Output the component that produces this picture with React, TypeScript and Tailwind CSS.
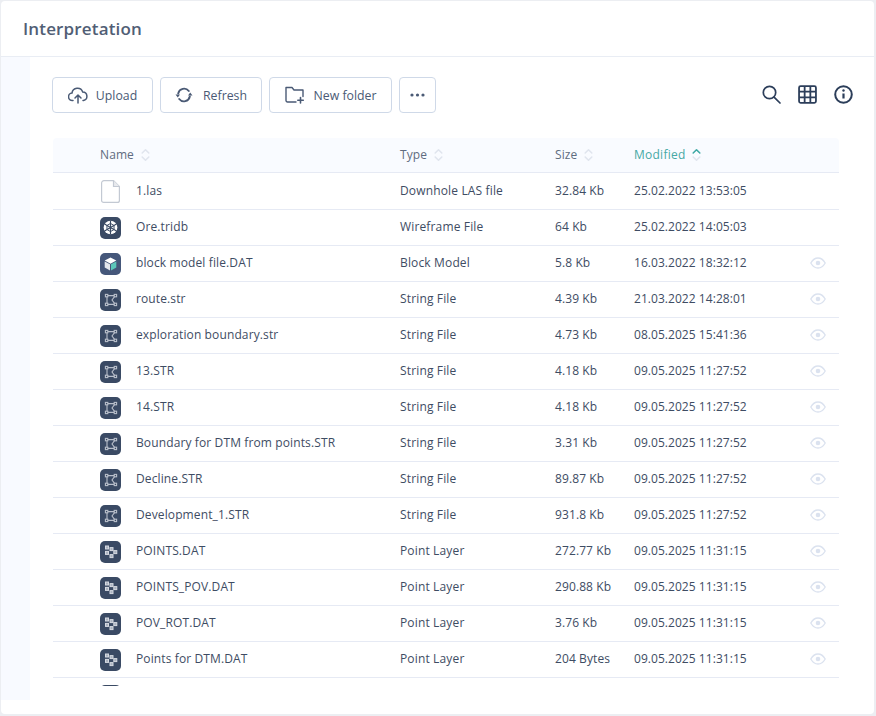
import React from "react";

const Tile = ({ children, tone }: { children: React.ReactNode; tone?: string }) => (
  <div className={`w-[21px] h-[22px] rounded-[5px] ${tone ?? "bg-[#3a4a64]"} flex items-center justify-center shrink-0`}>{children}</div>
);

const FileIcon = () => (
  <svg width="19" height="23" viewBox="0 0 19 23" fill="none" stroke="#c3c9d3" strokeWidth="1.200" className="ml-[1px]">
    <path d="M3 .6h9.500L18.400 6.500v13.900a2 2 0 0 1-2 2H2.600a2 2 0 0 1-2-2V3a2.400 2.400 0 0 1 2.400-2.400z" />
    <path d="M12.500.6v5.900h5.900" fill="#e8eaee" />
  </svg>
);

const WireIcon = () => (
  <Tile>
    <svg width="15" height="15" viewBox="0 0 14 14">
      <circle cx="7" cy="7" r="6.400" fill="#fff" />
      <path d="M7 .5v13M1.400 3.800l11.200 6.400M12.600 3.800 1.400 10.200" stroke="#3a4a64" strokeWidth="1.100" />
      <path d="M7 3.200 10.300 5.100v3.800L7 10.800 3.700 8.900V5.100z" stroke="#3a4a64" strokeWidth=".9" fill="none" />
    </svg>
  </Tile>
);

const BlockIcon = () => (
  <Tile tone="bg-[#45577a]">
    <svg width="13" height="14" viewBox="0 0 13 14">
      <path d="M6.500.5 12.300 3.600 6.500 6.700.7 3.600z" fill="#fff" />
      <path d="M.7 4.400 6 7.300v6.200L.7 10.600z" fill="#e4e8ee" />
      <path d="M7 7.300l5.300-2.900v6.200L7 13.500z" fill="#5cc8ba" />
    </svg>
  </Tile>
);

const StringIcon = () => (
  <Tile>
    <svg width="14" height="14" viewBox="0 0 14 14" fill="none" stroke="#b9bfca" strokeWidth="1.100">
      <path d="M3 2.600h8.400L8 7l3.400 4.400H3z" />
      <rect x="1.400" y="1.400" width="2.400" height="2.400" fill="#3a4a64" />
      <rect x="10.200" y="1.400" width="2.400" height="2.400" fill="#3a4a64" />
      <rect x="1.400" y="10.200" width="2.400" height="2.400" fill="#3a4a64" />
      <rect x="10.200" y="10.200" width="2.400" height="2.400" fill="#3a4a64" />
    </svg>
  </Tile>
);

const PointIcon = () => (
  <Tile>
    <svg width="14" height="14" viewBox="0 0 14 14" fill="#aab2c0" stroke="#d6dae1" strokeWidth="1">
      <rect x="1.500" y="1" width="3" height="3" />
      <rect x="6" y="2.600" width="3" height="3" />
      <rect x="1.500" y="6.400" width="3" height="3" />
      <rect x="9.800" y="5.600" width="3" height="3" />
      <rect x="6" y="9.600" width="3" height="3" />
    </svg>
  </Tile>
);

const Eye = () => (
  <svg width="16" height="12" viewBox="0 0 16 12" fill="none" className="mb-[2px]">
    <path d="M.8 6C2.600 2.800 5 1 8 1s5.400 1.800 7.200 5C13.400 9.200 11 11 8 11S2.600 9.200.8 6z" stroke="#dbe2ef" strokeWidth="1.300" />
    <circle cx="8" cy="6" r="2.300" fill="#dbe2ef" />
  </svg>
);

const Sort = ({ active }: { active?: boolean }) => (
  <svg width="9" height="14" viewBox="0 0 9 14" fill="none" strokeWidth="1.600" strokeLinecap="round" strokeLinejoin="round">
    <path d="M1.200 5 4.500 1.800 7.800 5" stroke={active ? "#3fa9a5" : "#e0e5ee"} />
    <path d="M1.200 9 4.500 12.200 7.800 9" stroke="#e0e5ee" />
  </svg>
);

type Kind = "file" | "wire" | "block" | "string" | "point";
const icons: Record<Kind, React.ReactNode> = {
  file: <FileIcon />,
  wire: <WireIcon />,
  block: <BlockIcon />,
  string: <StringIcon />,
  point: <PointIcon />,
};

const rows: [Kind, string, string, string, string, boolean][] = [
  ["file", "1.las", "Downhole LAS file", "32.84 Kb", "25.02.2022 13:53:05", false],
  ["wire", "Ore.tridb", "Wireframe File", "64 Kb", "25.02.2022 14:05:03", false],
  ["block", "block model file.DAT", "Block Model", "5.8 Kb", "16.03.2022 18:32:12", true],
  ["string", "route.str", "String File", "4.39 Kb", "21.03.2022 14:28:01", true],
  ["string", "exploration boundary.str", "String File", "4.73 Kb", "08.05.2025 15:41:36", true],
  ["string", "13.STR", "String File", "4.18 Kb", "09.05.2025 11:27:52", true],
  ["string", "14.STR", "String File", "4.18 Kb", "09.05.2025 11:27:52", true],
  ["string", "Boundary for DTM from points.STR", "String File", "3.31 Kb", "09.05.2025 11:27:52", true],
  ["string", "Decline.STR", "String File", "89.87 Kb", "09.05.2025 11:27:52", true],
  ["string", "Development_1.STR", "String File", "931.8 Kb", "09.05.2025 11:27:52", true],
  ["point", "POINTS.DAT", "Point Layer", "272.77 Kb", "09.05.2025 11:31:15", true],
  ["point", "POINTS_POV.DAT", "Point Layer", "290.88 Kb", "09.05.2025 11:31:15", true],
  ["point", "POV_ROT.DAT", "Point Layer", "3.76 Kb", "09.05.2025 11:31:15", true],
  ["point", "Points for DTM.DAT", "Point Layer", "204 Bytes", "09.05.2025 11:31:15", true],
];

const Button = ({ icon, label, w, gap }: { icon: React.ReactNode; label: string; w: string; gap: string }) => (
  <button className={`${w} ${gap} h-[36px] rounded-[4px] border border-[#cfd9e8] bg-white flex items-center justify-center text-[12.300px] font-medium text-[#4a5a75]`}>
    {icon}
    {label && <span className="pt-[2px]">{label}</span>}
  </button>
);

export default function App() {
  return (
    <div className="w-[876px] h-[716px] bg-[#eceef2] pl-[1px] pt-[1px] pr-[2px] pb-[2px] overflow-hidden" style={{ fontFamily: '"Open Sans", "Noto Sans", sans-serif' }}>
      <div className="h-full bg-white rounded-[4px] flex flex-col overflow-hidden">
        <div className="h-[56px] border-b border-[#e9edf4] pl-[22px] flex items-center shrink-0">
          <h1 className="text-[17px] font-semibold text-[#515e75] tracking-[0.15px]">Interpretation</h1>
        </div>
        <div className="flex h-[643px]">
          <div className="w-[29px] bg-[#f8faff] shrink-0" />
          <div className="flex-1 min-w-0 flex flex-col">
            <div className="h-[81px] pt-[20px] pl-[22px] pr-[21px] flex justify-between shrink-0">
              <div className="flex gap-[7px] items-start">
                <Button
                  w="w-[101px]"
                  gap="gap-[8px]"
                  label="Upload"
                  icon={
                    <svg width="20" height="17" viewBox="0 0 20 17" fill="none" stroke="#4a5a75" strokeWidth="1.500" strokeLinecap="round" strokeLinejoin="round">
                      <path d="M5 13.500H4.500A3.700 3.700 0 0 1 4 6.100 5.500 5.500 0 0 1 14.700 5a4.300 4.300 0 0 1 .8 8.500H15" />
                      <path d="M10 16V8.500M7 11l3-3 3 3" />
                    </svg>
                  }
                />
                <Button
                  w="w-[102px]"
                  gap="gap-[10px]"
                  label="Refresh"
                  icon={
                    <svg width="18" height="16" viewBox="0 0 18 16" fill="none" stroke="#4a5a75" strokeWidth="1.900" strokeLinecap="round">
                      <path d="M3.200 6.500A6 6 0 0 1 13.800 4" />
                      <path d="M14.800 9.500A6 6 0 0 1 4.200 12" />
                      <path d="M.5 7.500h4.500L2.800 10.500zM17.500 8.500H13l2.200-3z" fill="#4a5a75" stroke="none" />
                    </svg>
                  }
                />
                <Button
                  w="w-[123px]"
                  gap="gap-[9px]"
                  label="New folder"
                  icon={
                    <svg width="20" height="18" viewBox="0 0 20 18" fill="none" stroke="#4a5a75" strokeWidth="1.400" strokeLinecap="round" strokeLinejoin="round">
                      <path d="M11 16H2.500A1.500 1.500 0 0 1 1 14.500V1.500h6l2 2.500h9v6.500" />
                      <path d="M15.500 11.500v5.500M12.800 14.200h5.500" strokeWidth="1.600" />
                    </svg>
                  }
                />
                <Button
                  w="w-[37px]"
                  gap="gap-0"
                  label=""
                  icon={
                    <svg width="15" height="4" viewBox="0 0 15 4" fill="#4a5a75">
                      <circle cx="2" cy="2" r="1.600" />
                      <circle cx="7.500" cy="2" r="1.600" />
                      <circle cx="13" cy="2" r="1.600" />
                    </svg>
                  }
                />
              </div>
              <div className="flex items-start gap-[17px] pt-[8px]">
                <svg width="19" height="19" viewBox="0 0 19 19" fill="none" stroke="#2c3e5a" strokeWidth="1.700" strokeLinecap="round">
                  <circle cx="7.500" cy="7.500" r="6.200" />
                  <path d="M12.300 12.300l5.700 5.700" />
                </svg>
                <svg width="19" height="19" viewBox="0 0 18 18" fill="none" stroke="#2c3e5a" strokeWidth="1.700">
                  <rect x="1" y="1" width="16" height="16" rx="1.500" />
                  <path d="M1 6.300h16M1 11.700h16M6.300 1v16M11.700 1v16" />
                </svg>
                <svg width="19" height="19" viewBox="0 0 19 19" fill="none" stroke="#2c3e5a" strokeWidth="2">
                  <circle cx="9.500" cy="9.500" r="8.300" />
                  <path d="M9.500 8.500v5" strokeWidth="2.200" />
                  <circle cx="9.500" cy="5.500" r="1.200" fill="#2c3e5a" stroke="none" />
                </svg>
              </div>
            </div>
            <div className="ml-[23px] mr-[35px] text-[12px] flex-1 min-h-0 overflow-hidden h-[548px]">
              <div className="h-[35px] bg-[#f9fbff] border-b border-[#e6eaf4] rounded-t-[4px] flex items-center text-[#5f6c80] tracking-[0.1px]">
                <div className="w-[47px] shrink-0" />
                <div className="w-[300px] flex items-center gap-[7px]">Name <Sort /></div>
                <div className="w-[155px] flex items-center gap-[7px]">Type <Sort /></div>
                <div className="w-[79px] flex items-center gap-[7px]">Size <Sort /></div>
                <div className="flex items-center gap-[6px] text-[#46a9a5] tracking-[0.25px]">Modified <Sort active /></div>
              </div>
              {rows.map((r, i) => (
                <div key={r[1]} className={`${i === 0 ? "h-[37px]" : "h-[36px]"} border-b border-[#e6eaf4] flex items-center text-[#3e4c63]`}>
                  <div className="w-[47px] shrink-0" />
                  <div className="w-[36px] shrink-0">{icons[r[0]]}</div>
                  <div className={`w-[264px] shrink-0 truncate tracking-[0.12px] ${i === 0 ? "pb-0" : "pb-[2px]"}`}>{r[1]}</div>
                  <div className={`w-[155px] shrink-0 tracking-[0.15px] ${i === 0 ? "pb-0" : "pb-[2px]"}`}>{r[2]}</div>
                  <div className={`w-[79px] shrink-0 tracking-[0.1px] ${i === 0 ? "pb-0" : "pb-[2px]"}`}>{r[3]}</div>
                  <div className={`w-[176px] shrink-0 tracking-[0.05px] ${i === 0 ? "pb-0" : "pb-[2px]"}`}>{r[4]}</div>
                  {r[5] && <Eye />}
                </div>
              ))}
              <div className="h-[8px] overflow-hidden pl-[47px] pt-[7px]">
                <Tile><span /></Tile>
              </div>
            </div>
          </div>
        </div>
      </div>
    </div>
  );
}
